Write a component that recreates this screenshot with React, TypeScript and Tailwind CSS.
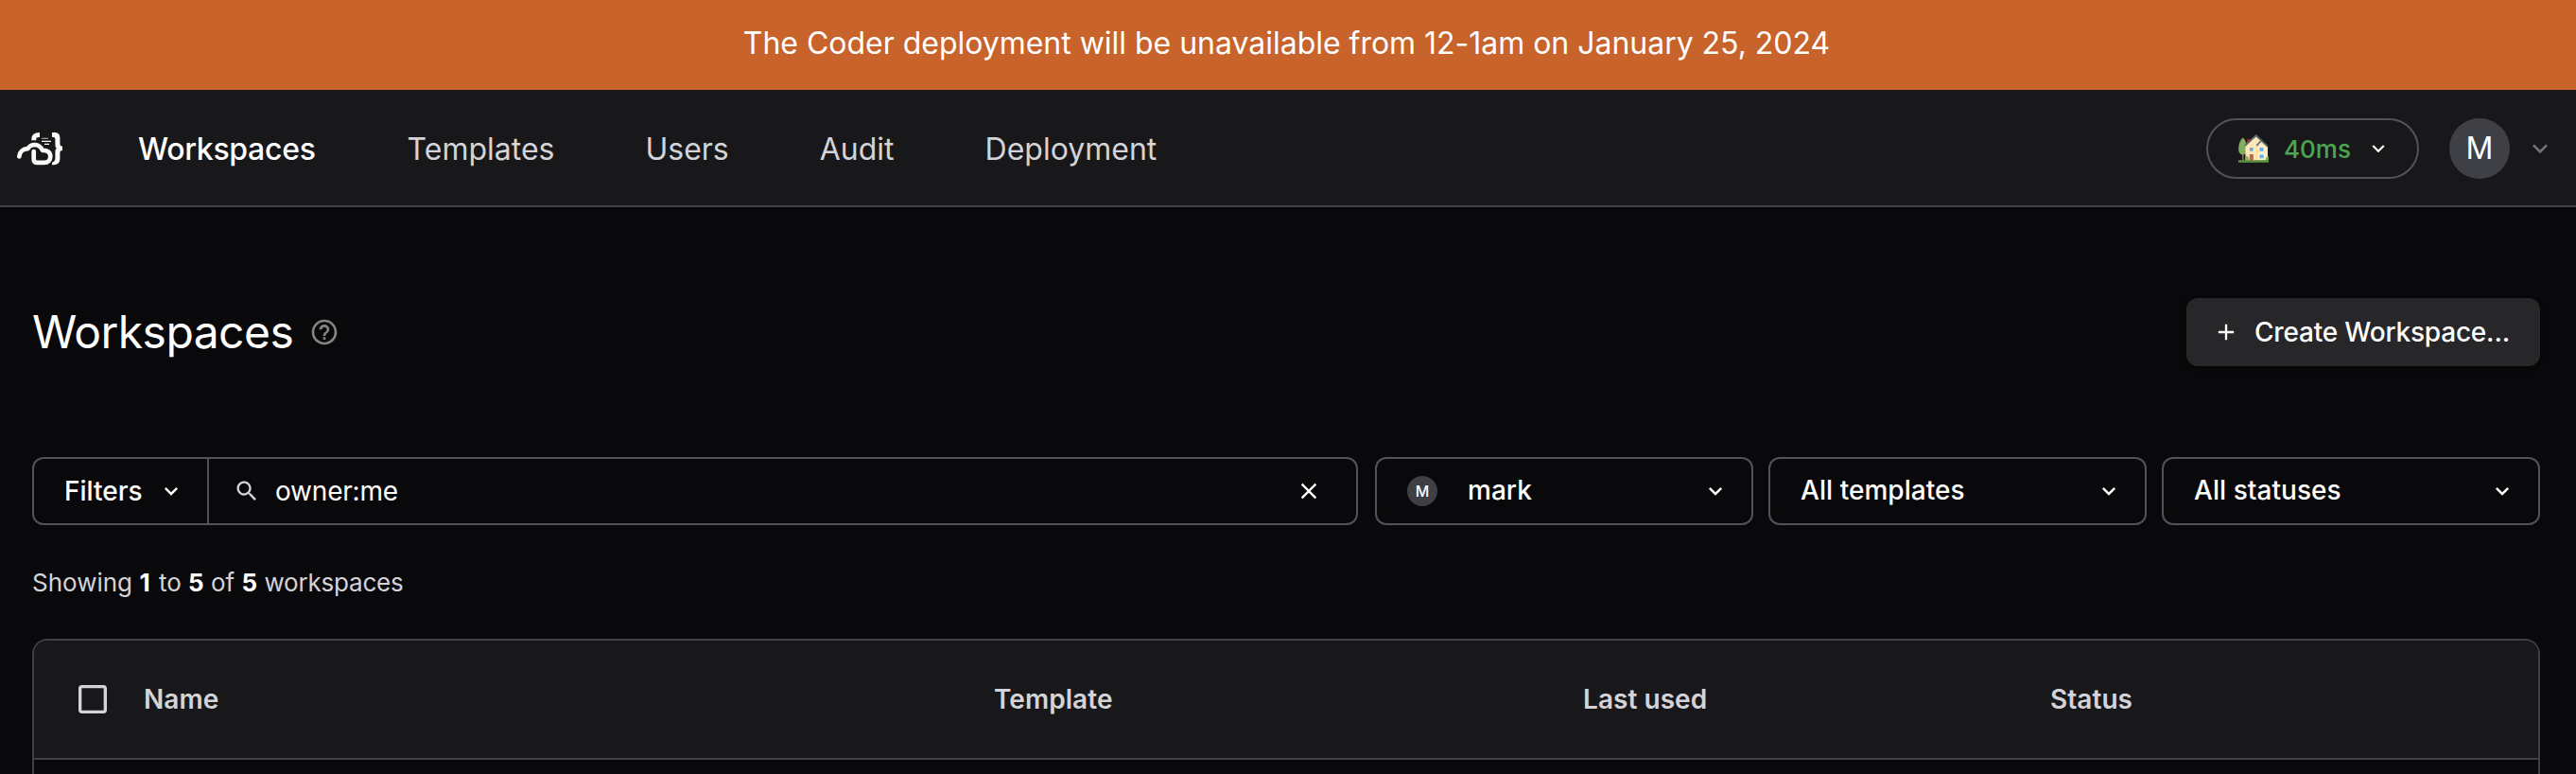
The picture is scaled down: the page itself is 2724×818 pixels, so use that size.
import React from "react";

type IconProps = { className?: string };

function Logo() {
  return (
    <svg className="block h-[38px] w-[50px] shrink-0" viewBox="0 0 50 38" fill="none">
      <path
        d="M4.300 27.400C4.800 22.300 8.300 19.300 13.300 19.200C15 16.500 17.800 15 20.700 15C24.500 15.200 27.300 17.300 28.900 20.800C34 20.600 37.300 23.200 37.300 27.300C37.300 31.300 34.600 33.900 31 33.900H23.500C21 33.900 19.700 32.500 19.700 30.200V22"
        stroke="#fafafa"
        strokeWidth="4.700"
        strokeLinecap="round"
        strokeLinejoin="round"
      />
      <path d="M19.800 10.300V9C19.800 5.800 21.500 4.400 26 4.400" stroke="#fafafa" strokeWidth="5" />
      <path
        d="M39 2H41C45.800 2 47.400 4 47.400 8V13.500C47.400 15.600 48 16.600 50 16.600V21C48 21 47.400 22 47.400 24V29C47.400 33.800 45.200 36.300 40 36.300H39V33.800C41.500 32.800 42.400 31.500 42.400 29V23.500C42.400 21.500 42.400 20 43.800 18.800C42.400 17.600 42.400 16 42.400 14V9.500C42.400 7.500 41.500 6.800 39 6.800Z"
        fill="#fafafa"
      />
      <path d="M28 8.300H35" stroke="#a1a1aa" strokeWidth="1.200" />
      <path d="M28 11.400H38M31 14.400H36" stroke="#fafafa" strokeWidth="1.100" />
    </svg>
  );
}

function House() {
  return (
    <svg className="block h-[32px] w-[32px] shrink-0" viewBox="0 0 32 32">
      <path d="M9 6h3.600v7H9z" fill="#9b1c1f" />
      <path d="M4 20h1.600v9H4z" fill="#9c6a3a" />
      <path d="M4.700 4.500C2 6.500.2 11.500.2 16.500c0 4 2 6 4.500 6s4.500-2 4.500-6c0-5-1.800-10-4.500-12z" fill="#7fae5e" />
      <path d="M7.500 29V12L18.600 2.500 31 14.500V29z" fill="#ffe8b6" />
      <path d="M19.300 17l4-6 7.700 6v12H19.300z" fill="#fff0cc" />
      <path d="M19 16h1v13h-1z" fill="#ffd97f" />
      <path d="M7 13L18.600 2.300 30.800 13.600M19.200 13l4.600-5" fill="none" stroke="#5d6c76" strokeWidth="1.800" />
      <path d="M12 15h3.500v3.700H12zM22.500 15h4v3.700h-4zM22.500 22.500h4v3.700h-4z" fill="#62aaf0" />
      <path d="M11.800 22h4v7h-4z" fill="#b5694f" />
      <path d="M7 29c-.5-3 .5-5 2-5s2.300 2 2.300 5zM28.500 29c0-3 1-5 3.300-5v5z" fill="#8bb45f" />
      <path d="M0 28.200h32v2.600H0z" fill="#5c8f43" />
    </svg>
  );
}

function Icon({ className, d }: IconProps & { d: string }) {
  return (
    <svg className={className} viewBox="0 0 24 24" fill="currentColor">
      <path d={d} />
    </svg>
  );
}

const paths = {
  chevron: "M7.41 8.59 12 13.17l4.59-4.58L18 10l-6 6-6-6 1.41-1.41z",
  add: "M19 13h-6v6h-2v-6H5v-2h6V5h2v6h6v2z",
  close: "M19 6.41 17.59 5 12 10.590 6.410 5 5 6.410 10.590 12 5 17.590 6.410 19 12 13.410 17.590 19 19 17.590 13.410 12z",
  search:
    "M15.5 14h-.79l-.28-.27C15.41 12.59 16 11.11 16 9.5 16 5.91 13.09 3 9.5 3S3 5.91 3 9.5 5.91 16 9.5 16c1.61 0 3.090-.59 4.230-1.570l.27.28v.79l5 4.990L20.490 19l-4.990-5zm-6 0C7.010 14 5 11.990 5 9.500S7.010 5 9.500 5 14 7.010 14 9.500 11.990 14 9.500 14z",
  help:
    "M11 18h2v-2h-2v2zm1-16C6.480 2 2 6.480 2 12s4.480 10 10 10 10-4.480 10-10S17.520 2 12 2zm0 18c-4.410 0-8-3.590-8-8s3.590-8 8-8 8 3.590 8 8-3.590 8-8 8zm0-14c-2.210 0-4 1.790-4 4h2c0-1.100.9-2 2-2s2 .9 2 2c0 2-3 1.750-3 5h2c0-2.250 3-2.500 3-5 0-2.210-1.790-4-4-4z",
  checkbox: "M19 5v14H5V5h14m0-2H5c-1.100 0-2 .9-2 2v14c0 1.100.9 2 2 2h14c1.100 0 2-.9 2-2V5c0-1.100-.9-2-2-2z",
};

function Select({ label, avatar }: { label: string; avatar?: boolean }) {
  return (
    <button className="flex h-[72px] w-[400px] shrink-0 items-center rounded-[12px] border-2 border-[#52525b] pr-[24px] pl-[32px] text-[28px] font-medium tracking-[0.05px] text-white">
      {avatar && (
        <span className="mr-[32px] flex h-[32px] w-[32px] items-center justify-center rounded-full bg-[#3f3f46] text-[16px]">
          M
        </span>
      )}
      <span className="pb-[2px]">{label}</span>
      <Icon d={paths.chevron} className="ml-auto h-[28px] w-[28px]" />
    </button>
  );
}

const navLinks = ["Templates", "Users", "Audit", "Deployment"];

export default function App() {
  return (
    <div className="h-[818px] w-full overflow-hidden bg-[#09090b] font-['Inter',sans-serif] text-white">
      <div className="flex h-[95px] items-center justify-center bg-[#c8632b] pr-[3px] pb-[3px] text-[32px] tracking-[-0.02px]">
        The Coder deployment will be unavailable from 12-1am on January 25, 2024
      </div>

      <header className="flex h-[124px] items-center border-b-2 border-[#3f3f46] bg-[#18181b] pt-[2px] pr-[22px] pl-[16px] text-[32px]">
        <Logo />
        <nav className="ml-[80px] flex items-center gap-[96px] pt-[2px] text-[#d4d4d8]">
          <span className="mr-[1px] font-medium tracking-[-0.3px] text-white">Workspaces</span>
          {navLinks.map((link) => (
            <span key={link}>{link}</span>
          ))}
        </nav>
        <div className="ml-auto flex items-center">
          <button className="flex h-[64px] w-[225px] items-center rounded-full border-2 border-[#52525b] pl-[32px] text-[26px] font-medium text-[#4ca64f]">
            <House />
            <span className="ml-[16px]">40ms</span>
            <Icon d={paths.chevron} className="ml-[16px] h-[26px] w-[26px] shrink-0 text-white" />
          </button>
          <span className="ml-[32px] flex h-[64px] w-[64px] items-center justify-center rounded-full bg-[#3f3f46] text-[32px]">
            M
          </span>
          <Icon d={paths.chevron} className="ml-[16px] h-[32px] w-[32px] text-[#71717a]" />
        </div>
      </header>

      <main className="pt-[96px] pr-[38px] pl-[34px]">
        <div className="flex h-[72px] items-center justify-between">
          <div className="flex items-center gap-[17px]">
            <h1 className="text-[48px] leading-[72px] tracking-[-0.55px]">Workspaces</h1>
            <Icon d={paths.help} className="h-[32px] w-[32px] text-[#848485]" />
          </div>
          <button className="flex h-[72px] w-[374px] items-center gap-[16px] rounded-[12px] bg-[#27272a] pl-[28px] text-[28px] font-medium tracking-[-0.2px] whitespace-nowrap shadow-[0_2px_4px_rgba(0,0,0,0.4)]">
            <Icon d={paths.add} className="h-[28px] w-[28px] shrink-0" />
            Create Workspace...
          </button>
        </div>

        <div className="mt-[96px] flex">
          <div className="mr-[18px] flex h-[72px] w-[1402px] items-center rounded-[12px] border-2 border-[#52525b] text-[28px]">
            <button className="flex h-full w-[185px] items-center gap-[16px] border-r-2 border-[#52525b] pl-[32px] font-medium">
              <span>Filters</span>
              <Icon d={paths.chevron} className="h-[28px] w-[28px]" />
            </button>
            <div className="flex flex-1 items-center pr-[36px] pl-[26px]">
              <Icon d={paths.search} className="h-[28px] w-[28px] text-[#d4d4d8]" />
              <span className="ml-[16px] tracking-[-0.2px]">owner:me</span>
              <Icon d={paths.close} className="ml-auto h-[28px] w-[28px]" />
            </div>
          </div>
          <div className="flex gap-[16px]">
            <Select label="mark" avatar />
            <Select label="All templates" />
            <Select label="All statuses" />
          </div>
        </div>

        <p className="mt-[42px] text-[26px] leading-[38px] text-[#d4d4d8]">
          Showing <strong className="mr-[2px] font-bold text-white">1</strong> to{" "}
          <strong className="font-bold text-white">5</strong> of{" "}
          <strong className="font-bold text-white">5</strong> <span className="tracking-[-0.2px]">workspaces</span>
        </p>

        <div className="mt-[40px] h-[300px] overflow-hidden rounded-[16px] border-2 border-[#3f3f46]">
          <div className="flex h-[126px] items-center border-b-2 border-[#3f3f46] bg-[#18181b] pl-[42px] text-[28px] font-semibold tracking-[0.05px] text-[#d4d4d8]">
            <Icon d={paths.checkbox} className="mr-[34px] h-[40px] w-[40px]" />
            <span className="w-[899px]">Name</span>
            <span className="w-[623px]">Template</span>
            <span className="w-[494px]">Last used</span>
            <span>Status</span>
          </div>
        </div>
      </main>
    </div>
  );
}
